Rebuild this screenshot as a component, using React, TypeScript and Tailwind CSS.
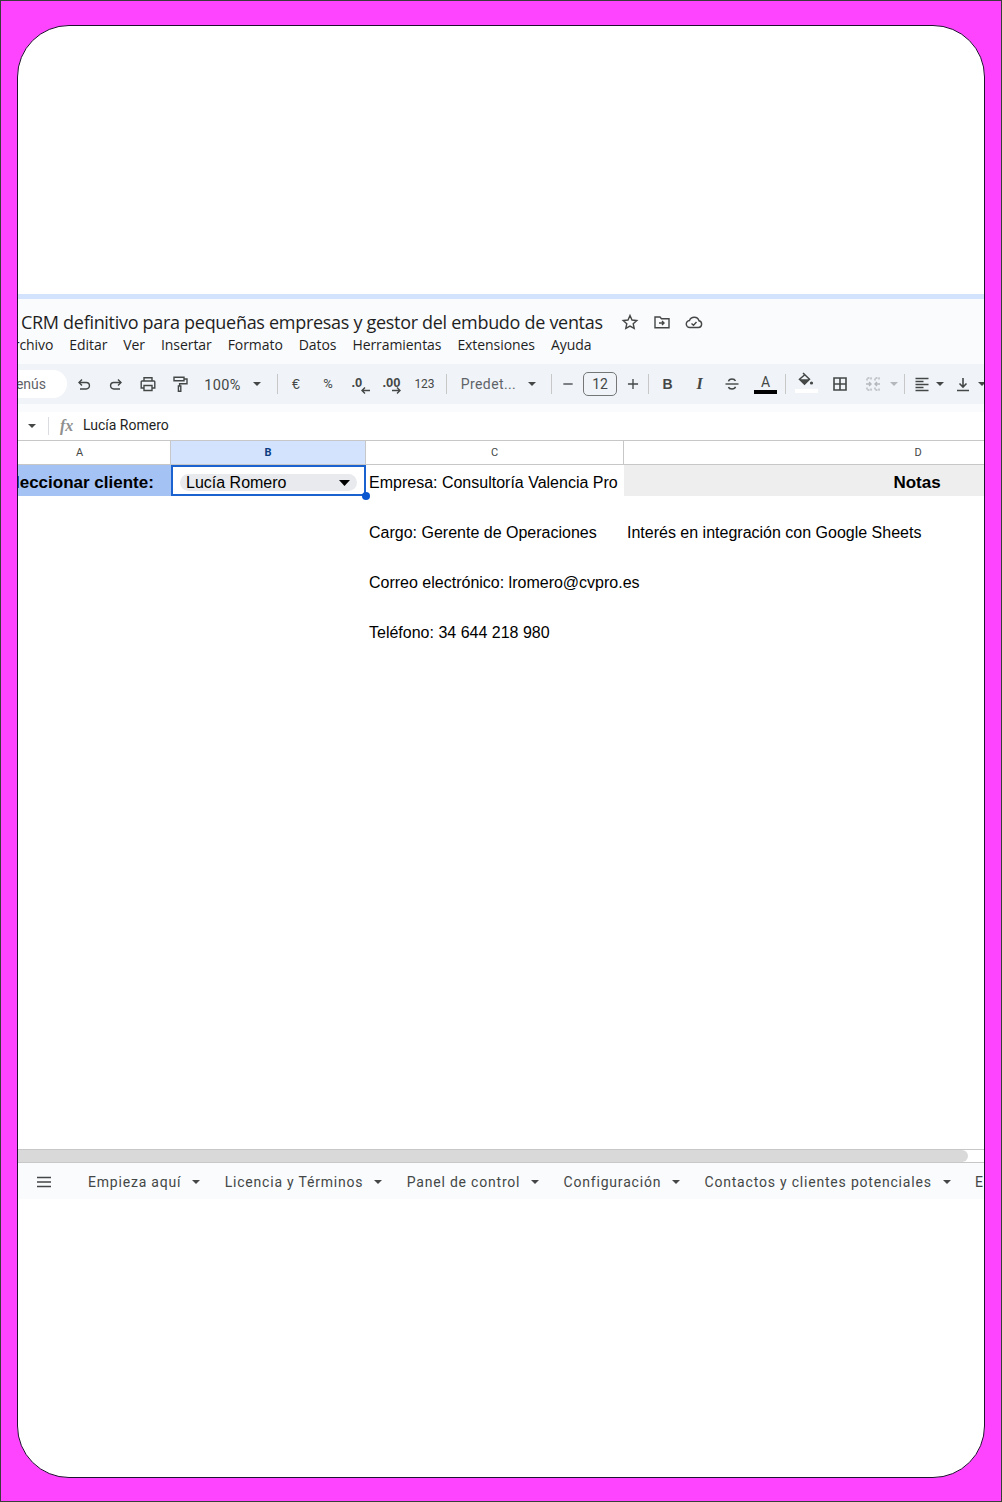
import type { ReactNode } from "react";

const sans = "font-['Roboto',sans-serif]";
const title = "font-['Open_Sans',sans-serif]";
const arial = "font-['Liberation_Sans',Arial,sans-serif]";

function Ico({ size = 18, children, className = "" }: { size?: number; children: ReactNode; className?: string }) {
    return (
        <svg width={size} height={size} viewBox="0 0 18 18" fill="none" stroke="#444746" strokeWidth="1.4" className={className}>
            {children}
        </svg>
    );
}

function Caret({ color = "#444746" }: { color?: string }) {
    return (
        <svg width="8" height="4" viewBox="0 0 10 5">
            <path d="M0 0h10L5 5z" fill={color} />
        </svg>
    );
}

function Cell({ w = "w-8", children }: { w?: string; children?: ReactNode }) {
    return <div className={`${w} h-full flex items-center justify-center shrink-0`}>{children}</div>;
}

function Sep() {
    return <div className="w-px h-[20px] bg-[#c7c7c7] shrink-0" />;
}

function Toolbar() {
    return (
        <div className={`h-[40px] bg-[#f0f4f9] flex items-center text-[#444746] ${sans}`}>
            {/* search pill, cut off by the panel */}
            <div className="w-[49px] h-[28px] bg-white rounded-r-full flex items-center justify-end pr-[21px] overflow-hidden shrink-0">
                <span className="text-[14px] text-[#5f6368]">Menús</span>
            </div>
            <div className="w-px shrink-0" />
            <Cell>
                <Ico>
                    <path d="M4 7.500h7.200a3.200 3.200 0 0 1 0 6.500H5" />
                    <path d="M7 4.500l-3 3 3 3" />
                </Ico>
            </Cell>
            <Cell>
                <Ico>
                    <path d="M14 7.500H6.800a3.200 3.200 0 0 0 0 6.500H13" />
                    <path d="M11 4.500l3 3-3 3" />
                </Ico>
            </Cell>
            <Cell>
                <Ico>
                    <path d="M5 6V2.800h8V6" />
                    <path d="M5 13H2.200V6.800a.8.8 0 0 1 .8-.8h12a.8.8 0 0 1 .8.8V13H13" />
                    <path d="M5 10.500h8v5H5z" />
                </Ico>
            </Cell>
            <Cell>
                <Ico>
                    <path d="M3 2.200h10v3.600H3z" />
                    <path d="M13 4h3v4.800H8.600V11" />
                    <path d="M7.400 11h2.400v5.200H7.400z" />
                </Ico>
            </Cell>
            <Cell w="w-[81px]">
                <span className="text-[14.500px] tracking-[0.4px] ml-[-8px] mr-[12px] pt-[4px]">100%</span>
                <Caret />
            </Cell>
            <Sep />
            <Cell w="w-[36px]">
                <span className={`text-[14px] ${arial}`}>€</span>
            </Cell>
            <Cell w="w-[28px]">
                <span className="text-[13px]">%</span>
            </Cell>
            <Cell w="w-[37px]">
                <div className="relative w-[18px] h-[18px]">
                    <span className={`absolute left-0 top-[-2px] text-[13px] font-bold ${arial}`}>.0</span>
                    <svg width="9" height="7" viewBox="0 0 9 7" className="absolute left-[9px] top-[12px]" fill="none" stroke="#444746" strokeWidth="1.4">
                        <path d="M9 3.500H1M4 .5l-3 3 3 3" />
                    </svg>
                </div>
            </Cell>
            <Cell w="w-[27px]">
                <div className="relative w-[20px] h-[18px]">
                    <span className={`absolute left-0 top-[-2px] text-[13px] font-bold ${arial}`}>.00</span>
                    <svg width="9" height="7" viewBox="0 0 9 7" className="absolute left-[9px] top-[12px]" fill="none" stroke="#444746" strokeWidth="1.4">
                        <path d="M0 3.500h8M5 .5l3 3-3 3" />
                    </svg>
                </div>
            </Cell>
            <Cell w="w-[37px]">
                <span className="text-[12px]">123</span>
            </Cell>
            <div className="w-[3px] shrink-0" />
            <Sep />
            <Cell w="w-[104px]">
                <span className="text-[14px] tracking-[0.4px] text-[#5f6368] ml-[-1px] mr-[12px]">Predet...</span>
                <Caret />
            </Cell>
            <Sep />
            <Cell w="w-[31px]">
                <Ico size={14}>
                    <path d="M3 9h12" strokeWidth="1.7" />
                </Ico>
            </Cell>
            <div className="w-[34px] h-[24px] border border-[#747775] rounded-[5px] flex items-center justify-center text-[14px] shrink-0">12</div>
            <Cell w="w-[31px]">
                <Ico size={14}>
                    <path d="M2.500 9h13M9 2.500v13" strokeWidth="1.7" />
                </Ico>
            </Cell>
            <Sep />
            <Cell w="w-[37px]">
                <span className={`text-[14px] font-bold ${arial}`}>B</span>
            </Cell>
            <Cell w="w-[27px]">
                <span className="text-[16px] italic font-bold font-['Liberation_Serif',serif]">I</span>
            </Cell>
            <Cell w="w-[37px]">
                <Ico>
                    <path d="M2.500 9h13" />
                    <path d="M5.500 6.400C5.800 4.800 7.200 4 9 4s3 .7 3.500 2" />
                    <path d="M5.500 12c.4 1.400 1.800 2 3.500 2s3.100-.7 3.500-2.200" />
                </Ico>
            </Cell>
            <Cell w="w-[31px]">
                <div className="flex flex-col items-center w-[23px]">
                    <span className={`text-[14px] leading-[14px] ${sans}`}>A</span>
                    <div className="w-[23px] h-[4px] bg-black mt-[1px]" />
                </div>
            </Cell>
            <div className="w-[4px] shrink-0" />
            <Sep />
            <Cell w="w-[40px]">
                <div className="flex flex-col items-center w-[23px] mt-[-3px]">
                    <svg width="18" height="15" viewBox="0 0 18 15">
                        <path d="M6 1l6.500 6.300-5 5-5-5L7.500 3" fill="none" stroke="#444746" strokeWidth="1.500" />
                        <path d="M2.500 7.300h10l-5 5z" fill="#444746" />
                        <circle cx="14.500" cy="11" r="1.600" fill="#444746" />
                    </svg>
                    <div className="w-[23px] h-[4px] bg-white mt-[2px]" />
                </div>
            </Cell>
            <Cell w="w-[27px]">
                <Ico>
                    <path d="M3 3h12v12H3zM9 3v12M3 9h12" strokeWidth="1.6" />
                </Ico>
            </Cell>
            <Cell w="w-[39px]">
                <Ico>
                    <g stroke="#b4b7bb">
                        <path d="M3 5.500V3h4v2.500M11 5.500V3h4v2.500M3 12.500V15h4v-2.500M11 12.500V15h4v-2.500" strokeDasharray="2 1" />
                        <path d="M2 9h5M5 7l2 2-2 2M16 9h-5M13 7l-2 2 2 2" />
                    </g>
                </Ico>
            </Cell>
            <div className="w-[11px] flex justify-center shrink-0 ml-[-4px]">
                <Caret color="#b4b7bb" />
            </div>
            <div className="w-[5px] shrink-0" />
            <Sep />
            <Cell w="w-[34px]">
                <Ico>
                    <path d="M2.500 3.500h13M2.500 6.500h8M2.500 9.500h13M2.500 12.500h8M2.500 15.500h13" />
                </Ico>
            </Cell>
            <div className="w-[10px] flex justify-center shrink-0 ml-[-4px] mr-[7px]">
                <Caret />
            </div>
            <Cell w="w-[22px]">
                <Ico>
                    <path d="M9 3v9M5.500 8.500L9 12l3.500-3.500M3 15.500h12" strokeWidth="1.6" />
                </Ico>
            </Cell>
            <div className="w-[10px] flex justify-center shrink-0 ml-[3px]">
                <Caret />
            </div>
        </div>
    );
}

function Tab({ label }: { label: string }) {
    return (
        <div className="flex items-center shrink-0 pr-[24.300px]">
            <span>{label}</span>
            <span className="ml-[11px] flex">
                <Caret />
            </span>
        </div>
    );
}

const colGrid = "grid grid-cols-[182px_195px_258px_588px] ml-[-29px] w-[1223px]";

export default function App() {
    return (
        <div className="w-[1002px] h-[1502px] bg-[#ff44ff] border border-[#3c3c3c] px-[16px] pt-[24px] pb-[23px]">
            <div className="h-full border border-[#1f1030] rounded-[52px] bg-white overflow-hidden flex flex-col">
                <div className="h-[268px] shrink-0" />
                <div className="h-[5px] bg-[#d3e3fd] shrink-0" />

                {/* title + menus */}
                <div className="h-[65px] bg-[#f9fbfd] shrink-0 relative">
                    <div className="flex items-center h-[36px] pt-[10px] pl-[3px]">
                        <span className={`text-[18px] text-[#1f1f1f] whitespace-nowrap tracking-[-0.3px] ${title}`}>
                            CRM definitivo para pequeñas empresas y gestor del embudo de ventas
                        </span>
                        <div className="flex items-center ml-[18px] gap-[14px]">
                            <Ico>
                                <path d="M9 2.500l2 4.500 4.800.5-3.600 3.200 1 4.700L9 13.100 4.800 15.400l1-4.700L2.200 7.500 7 7z" />
                            </Ico>
                            <Ico>
                                <path d="M2 4h5l1.500 1.700H16v9H2z" />
                                <path d="M6 10h5M9 8l2 2-2 2" />
                            </Ico>
                            <Ico>
                                <path d="M5 14.500a3.500 3.500 0 0 1-.5-7A5 5 0 0 1 14 7.800a3.400 3.400 0 0 1-.5 6.700z" />
                                <path d="M6.500 10.500l2 1.800 3-3.300" />
                            </Ico>
                        </div>
                    </div>
                    <div className={`flex items-center gap-[16px] text-[14px] text-[#1f1f1f] ml-[-13px] mt-[-1px] tracking-[-0.07px] ${title}`}>
                        <span>Archivo</span>
                        <span>Editar</span>
                        <span>Ver</span>
                        <span>Insertar</span>
                        <span>Formato</span>
                        <span>Datos</span>
                        <span>Herramientas</span>
                        <span>Extensiones</span>
                        <span>Ayuda</span>
                    </div>
                </div>

                <Toolbar />
                <div className="h-[8px] bg-[#f9fbfd] shrink-0" />

                {/* formula bar */}
                <div className="h-[28px] flex items-center shrink-0 pb-[1px]">
                    <div className="ml-[10px] flex">
                        <Caret />
                    </div>
                    <div className="w-px h-[18px] bg-[#dadce0] ml-[12px]" />
                    <span className="ml-[11px] w-[23px] text-[16px] italic text-[#8f8f8f] font-['Liberation_Serif',serif] font-bold">fx</span>
                    <span className={`text-[14px] text-[#1f1f1f] ${sans}`}>Lucía Romero</span>
                </div>

                {/* column headers */}
                <div className={`${colGrid} h-[25px] border-y border-[#c7c7c7] text-[11px] text-[#444746] shrink-0 ${sans}`}>
                    <div className="flex items-center justify-center border-r border-[#c7c7c7] pt-px">A</div>
                    <div className="flex items-center justify-center border-r border-[#c7c7c7] pt-px bg-[#d3e3fd] font-bold text-[#0b3a80]">B</div>
                    <div className="flex items-center justify-center border-r border-[#c7c7c7] pt-px">C</div>
                    <div className="flex items-center justify-center pt-px">D</div>
                </div>

                {/* first row */}
                <div className={`${colGrid} h-[30px] text-[16px] text-black shrink-0 ${arial}`}>
                    <div className="bg-[#a4c2f4] flex items-center justify-center pt-[5px] pr-[12px] text-[17px] font-bold whitespace-nowrap">Seleccionar cliente:</div>
                    <div className="relative border-2 border-[#1a62d0] flex items-center pl-[7px] pr-[7px] pt-[5px]">
                        <div className="h-[17px] w-full bg-[#e8eaed] rounded-full flex items-center justify-between pl-[6px] pr-[7px]">
                            <span>Lucía Romero</span>
                            <svg width="11" height="6" viewBox="0 0 11 6">
                                <path d="M0 0h11L5.500 6z" fill="#000" />
                            </svg>
                        </div>
                        <div className="absolute right-[-6px] bottom-[-6px] w-[8px] h-[8px] rounded-full bg-[#0b57d0]" />
                    </div>
                    <div className="flex items-center pl-[3px] pt-[5px] whitespace-nowrap">Empresa: Consultoría Valencia Pro</div>
                    <div className="bg-[#eeeeee] flex items-center justify-center pt-[5px] pr-[2px] text-[17px] font-bold">Notas</div>
                </div>

                {/* client details */}
                <div className={`${colGrid} auto-rows-[30px] gap-y-[20px] mt-[23px] text-[16px] text-black flex-1 ${arial}`}>
                    <div className="col-start-3 flex items-center pl-[3px] whitespace-nowrap">Cargo: Gerente de Operaciones</div>
                    <div className="flex items-center pl-[3px] whitespace-nowrap">Interés en integración con Google Sheets</div>
                    <div className="col-start-3 flex items-center pl-[3px] whitespace-nowrap">Correo electrónico: lromero@cvpro.es</div>
                    <div className="col-start-3 flex items-center pl-[3px] whitespace-nowrap">Teléfono: 34 644 218 980</div>
                </div>

                {/* horizontal scrollbar */}
                <div className="h-[14px] border-y border-[#c7c7c7] shrink-0">
                    <div className="h-full w-[950px] bg-[#d9d9d9] rounded-r-full" />
                </div>

                {/* sheet tabs */}
                <div className={`h-[36px] bg-[#f9fbfd] flex items-center pt-[2px] text-[14px] text-[#444746] tracking-[0.8px] shrink-0 overflow-hidden ${sans}`}>
                    <svg width="16" height="12" viewBox="0 0 16 12" className="ml-[18px] mr-[36px] shrink-0">
                        <path d="M1 1.500h14M1 6h14M1 10.500h14" stroke="#444746" strokeWidth="1.400" />
                    </svg>
                    <Tab label="Empieza aquí" />
                    <Tab label="Licencia y Términos" />
                    <Tab label="Panel de control" />
                    <Tab label="Configuración" />
                    <Tab label="Contactos y clientes potenciales" />
                    <span className="shrink-0">E</span>
                </div>
                <div className="h-[278px] shrink-0" />
            </div>
        </div>
    );
}
